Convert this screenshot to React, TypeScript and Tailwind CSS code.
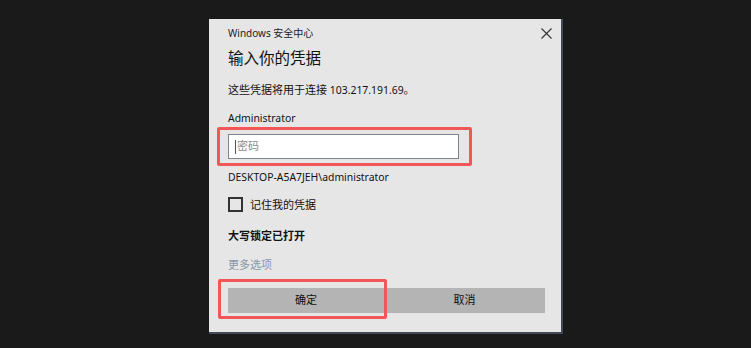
export default function App() {
  const cjk = { fontFamily: '"Noto Sans", "Noto Sans CJK SC", sans-serif' };

  return (
    <div className="w-[751px] h-[348px] bg-[#1a1a1a] overflow-hidden" style={cjk}>
      <div className="ml-[209px] pt-[19px]">
        <div className="w-[354px] bg-[#e6e6e6] border-r-2 border-b-2 border-[#434a55] pl-[19px] pr-[16px] pb-[19px] text-[#111]">
          {/* header */}
          <div className="pt-[7px] flex items-center justify-between h-[21px]">
            <span className="text-[10px] leading-[14px] text-[#222]">Windows 安全中心</span>
            <svg width="11" height="11" viewBox="0 0 11 11" className="mr-[-7px]">
              <path d="M0.5 0.5 L10.5 10.5 M10.5 0.5 L0.5 10.5" stroke="#333" strokeWidth="1.1" />
            </svg>
          </div>

          <div className="mt-[7px] text-[15.5px] leading-[22px]">输入你的凭据</div>

          <div className="mt-[13px] text-[11px] leading-[16px]">
            这些凭据将用于连接 <span className="text-[10.4px]">103.217.191.69</span>。
          </div>

          <div className="mt-[12px] text-[10.4px] leading-[16px]">Administrator</div>

          {/* password field with highlight */}
          <div className="mt-[8px] relative w-[231px]">
            <div className="h-[25px] bg-white border border-[#7d8590] flex items-center pl-[6px]">
              <span className="w-px h-[14px] bg-[#555] mr-px" />
              <span className="text-[11px] text-[#8c8c8c]">密码</span>
            </div>
            <span className="absolute -left-[11px] -top-[7px] -right-[13px] -bottom-[7px] border-[3px] border-[#f25757] rounded-[2px]" />
          </div>

          <div className="mt-[10px] text-[10.4px] leading-[16px]">DESKTOP-A5A7JEH\administrator</div>

          <div className="mt-[12px] flex items-center h-[15px]">
            <span className="w-[15px] h-[15px] border-2 border-[#333] bg-[#e6e6e6]" />
            <span className="ml-[7px] text-[11px] leading-[16px]">记住我的凭据</span>
          </div>

          <div className="mt-[16px] text-[11px] leading-[16px] font-bold">大写锁定已打开</div>

          <div className="mt-[13px] text-[11px] leading-[16px] text-[#8a96a8]">更多选项</div>

          <div className="mt-[15px] flex h-[25px]">
            <div className="relative w-[156px]">
              <div className="h-[25px] bg-[#b4b4b4] flex items-center justify-center text-[11px]">确定</div>
              <span className="absolute -left-[10px] -top-[9px] -right-[3px] -bottom-[6px] border-[3px] border-[#f25757] rounded-[2px]" />
            </div>
            <div className="flex-1 h-[25px] bg-[#b4b4b4] flex items-center justify-center text-[11px]">取消</div>
          </div>
        </div>
      </div>
    </div>
  );
}
